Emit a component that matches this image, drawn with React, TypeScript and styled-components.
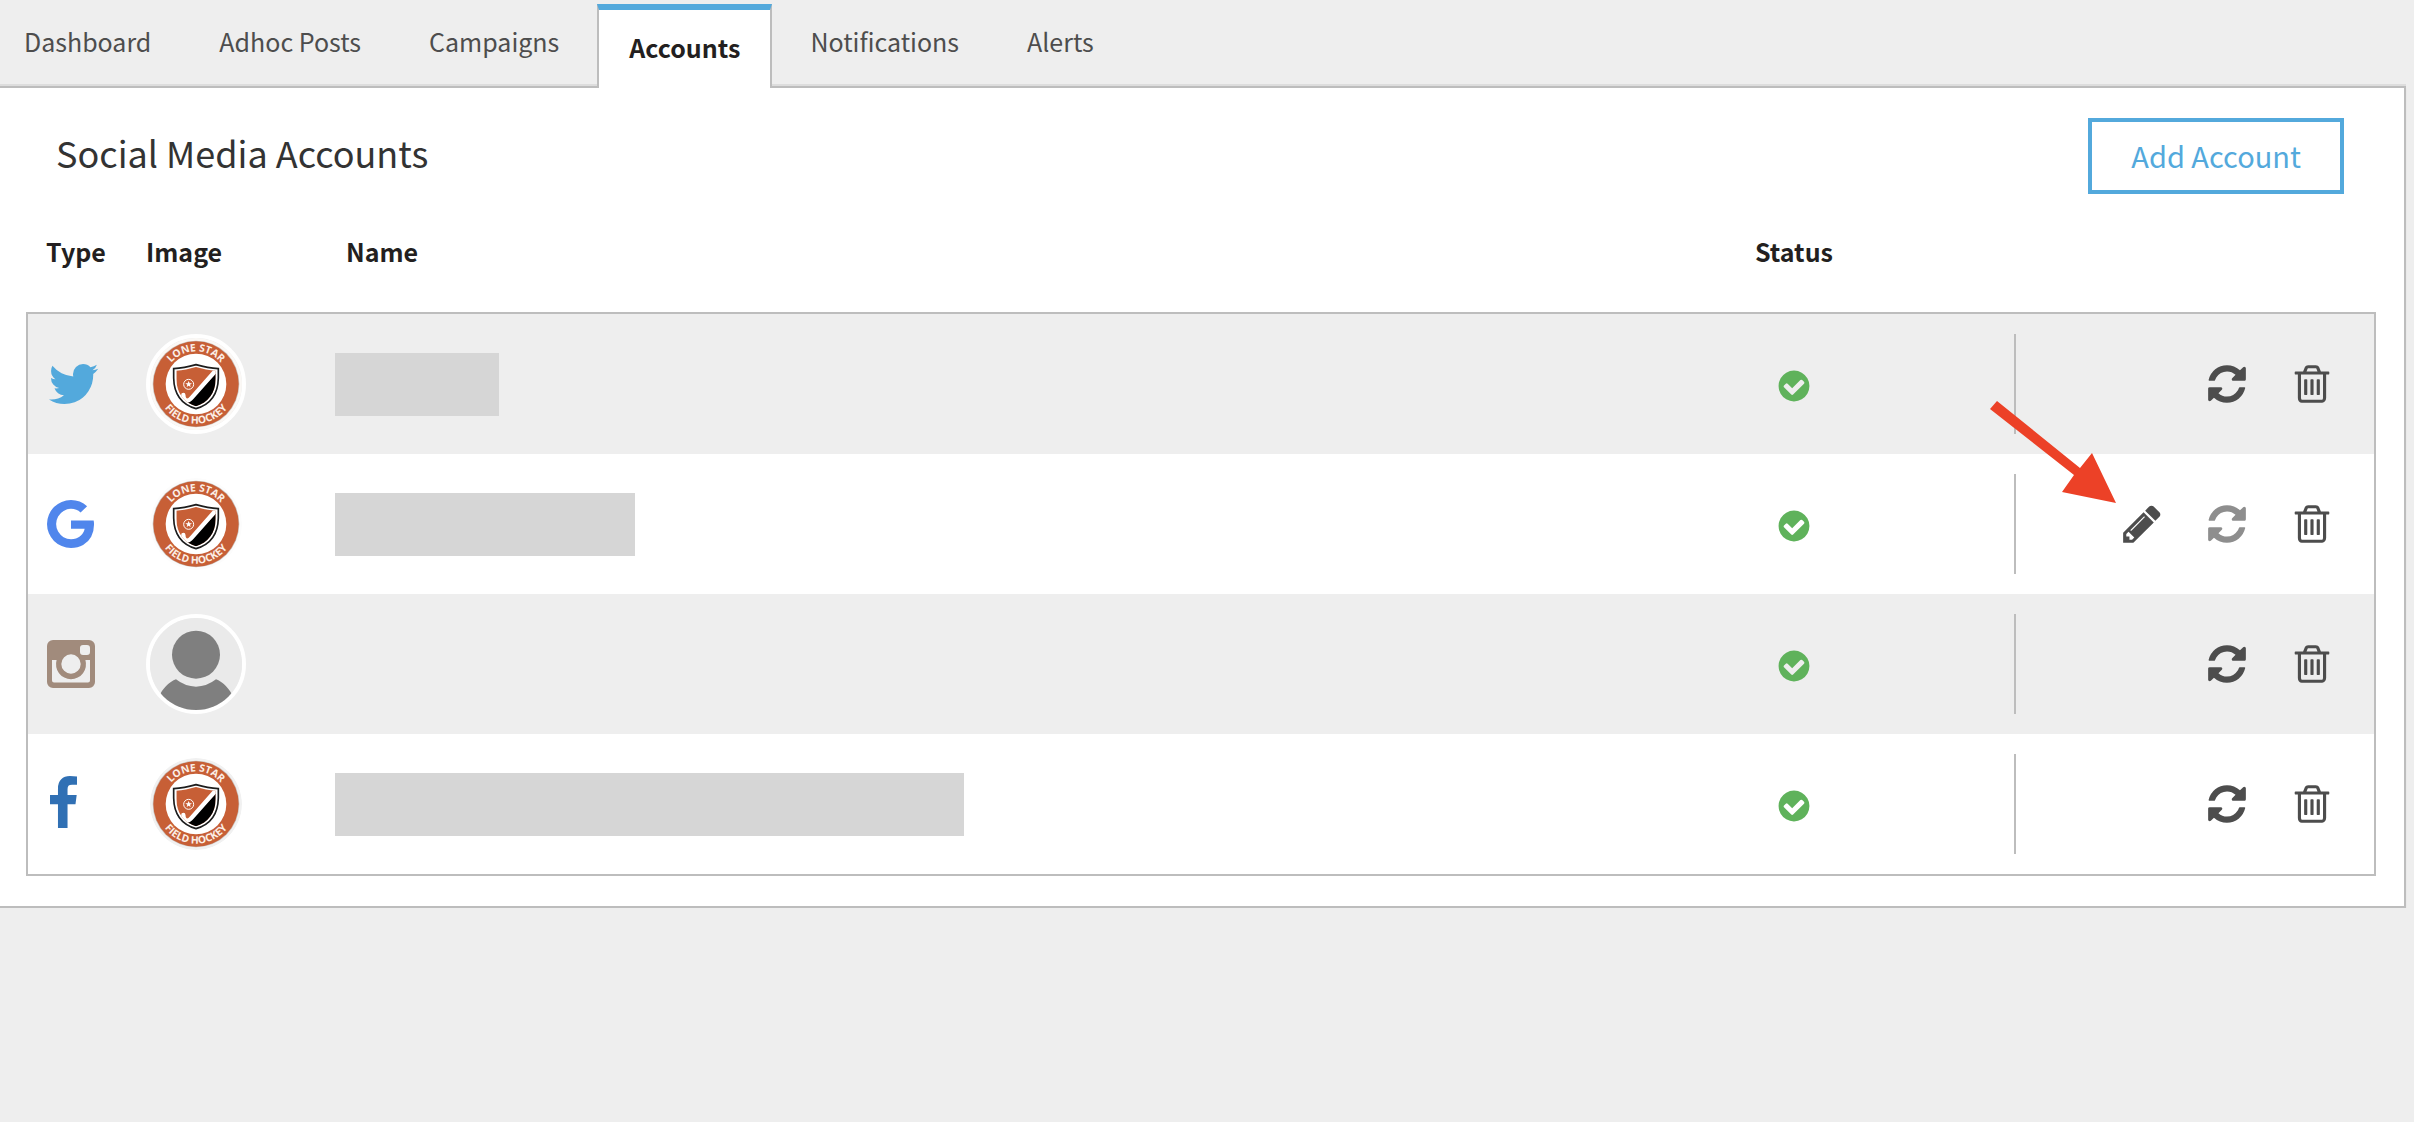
import React from "react";
import styled, { createGlobalStyle } from "styled-components";

const color = {
  page: "#eeeeee",
  panel: "#ffffff",
  line: "#bdbdbd",
  blue: "#53a9dc",
  text: "#4d4d4d",
  dark: "#231f20",
  title: "#333333",
  mask: "#d6d6d6",
  green: "#5fb25b",
};

const GlobalStyle = createGlobalStyle`
  *, *::before, *::after { box-sizing: border-box; }
  body {
    margin: 0;
    background: ${color.page};
    color: ${color.text};
    font-family: "Noto Sans CJK SC", "Noto Sans", sans-serif;
    font-size: 25px;
  }
`;

const Page = styled.div`
  padding-right: 8px;
`;

const TabBar = styled.nav`
  display: flex;
  align-items: flex-start;
  padding-top: 4px;
  margin-left: -10px;
  border-bottom: 2px solid #dddddd;
`;

const Tab = styled.a<{ $active?: boolean }>`
  position: relative;
  margin: 0 4px ${(p) => (p.$active ? "-4px" : "0")};
  padding: 21px 28px 27px;
  border: solid ${(p) => (p.$active ? color.line : "transparent")};
  border-width: 0 2px;
  line-height: 32px;
  color: ${color.text};
  text-decoration: none;
  ${(p) =>
    p.$active &&
    `
    padding: 21px 30px 25px;
    border-top: 6px solid ${color.blue};
    background: ${color.panel};
    color: ${color.dark};
    font-weight: 700;
  `}
`;

const Panel = styled.main`
  border: 2px solid ${color.line};
  border-left: 0;
  background: ${color.panel};
  box-shadow: 0 2px 2px rgba(0, 0, 0, 0.05);
`;

const PanelHeader = styled.header`
  display: flex;
  justify-content: space-between;
  align-items: baseline;
  padding: 30px 60px 0 56px;
`;

const Title = styled.h1`
  margin: 0;
  font-size: 36px;
  line-height: 48px;
  font-weight: 400;
  color: ${color.title};
`;

const AddButton = styled.button`
  padding: 15px 39px 17px;
  border: 4px solid ${color.blue};
  background: ${color.panel};
  color: ${color.blue};
  font-family: inherit;
  font-size: 29px;
  line-height: 36px;
  cursor: pointer;
`;

const TableArea = styled.div`
  padding: 0 28px 30px 26px;
`;

const Table = styled.table`
  width: 100%;
  table-layout: fixed;
  border-collapse: collapse;
`;

const Col = styled.col<{ $width?: number }>`
  width: ${(p) => (p.$width ? `${p.$width}px` : "auto")};
`;

const HeadCell = styled.th<{ $indent?: number; $center?: boolean }>`
  padding: 39px 0 43px ${(p) => p.$indent ?? 0}px;
  line-height: 36px;
  text-align: ${(p) => (p.$center ? "center" : "left")};
  color: ${color.dark};
`;

const Body = styled.tbody`
  border: 2px solid ${color.line};
`;

const Cell = styled.td<{ $indent?: number; $center?: boolean }>`
  height: 140px;
  padding: 0 0 0 ${(p) => p.$indent ?? 0}px;
  text-align: ${(p) => (p.$center ? "center" : "left")};
  vertical-align: middle;
  svg {
    display: inline-block;
    vertical-align: middle;
  }
`;

/* The outer rows share a pixel with the collapsed border of the table body. */
const Row = styled.tr`
  &:nth-child(odd) {
    background: ${color.page};
  }
  &:first-child ${Cell}, &:last-child ${Cell} {
    height: 141px;
  }
`;

const Avatar = styled.div`
  width: 100px;
  height: 100px;
  border: 4px solid #ffffff;
  border-radius: 50%;
  overflow: hidden;
  svg {
    display: block;
  }
`;

const Mask = styled.div<{ $width: number }>`
  width: ${(p) => p.$width}px;
  height: 63px;
  background: ${color.mask};
`;

const Actions = styled.div`
  position: relative;
  display: flex;
  justify-content: flex-end;
  align-items: center;
  gap: 41px;
  height: 100px;
  padding-right: 40px;
  border-left: 2px solid ${color.line};
`;

const IconButton = styled.button`
  width: 44px;
  height: 44px;
  padding: 0;
  border: 0;
  background: none;
  color: ${color.text};
  cursor: pointer;
  svg {
    display: block;
  }
  &:disabled {
    color: #8e8e8e;
    cursor: default;
  }
`;

const Pointer = styled.svg`
  position: absolute;
  left: -26px;
  top: -73px;
  pointer-events: none;
`;

const paths = {
  refresh:
    "M1639 1056q0 5-1 7-64 268-268 434.5t-478 166.5q-146 0-282.5-55t-243.5-157l-129 129q-19 19-45 19t-45-19-19-45v-448q0-26 19-45t45-19h448q26 0 45 19t19 45-19 45l-137 137q71 66 161 102t187 36q134 0 250-65t186-179q11-17 53-117 8-23 30-23h192q13 0 22.5 9.5t9.5 22.5zm25-800v448q0 26-19 45t-45 19h-448q-26 0-45-19t-19-45 19-45l138-138q-148-137-349-137-134 0-250 65t-186 179q-11 17-53 117-8 23-30 23h-199q-13 0-22.5-9.5t-9.5-22.5v-7q65-268 270-434.5t480-166.5q146 0 284 55.5t245 156.5l130-129q19-19 45-19t45 19 19 45z",
  trash:
    "M704 736v576q0 14-9 23t-23 9h-64q-14 0-23-9t-9-23v-576q0-14 9-23t23-9h64q14 0 23 9t9 23zm256 0v576q0 14-9 23t-23 9h-64q-14 0-23-9t-9-23v-576q0-14 9-23t23-9h64q14 0 23 9t9 23zm256 0v576q0 14-9 23t-23 9h-64q-14 0-23-9t-9-23v-576q0-14 9-23t23-9h64q14 0 23 9t9 23zm128 724v-948h-896v948q0 22 7 40.5t14.5 27 10.5 8.5h832q3 0 10.5-8.5t14.5-27 7-40.5zm-672-1076h448l-48-117q-7-9-17-11h-317q-10 2-17 11zm928 32v64q0 14-9 23t-23 9h-96v948q0 83-47 143.5t-113 60.5h-832q-66 0-113-58.5t-47-141.5v-952h-96q-14 0-23-9t-9-23v-64q0-14 9-23t23-9h309l70-167q15-37 54-63t79-26h320q40 0 79 26t54 63l70 167h309q14 0 23 9t9 23z",
  pencil:
    "M491 1536l91-91-235-235-91 91v107h128v128h107zm523-928q0-22-22-22-10 0-17 7l-542 542q-7 7-7 17 0 22 22 22 10 0 17-7l542-542q7-7 7-17zm-54-192l416 416-832 832h-416v-416zm683 96q0 53-37 90l-166 166-416-416 166-165q36-38 90-38 53 0 91 38l235 234q37 39 37 91z",
  check:
    "M1412 734q0-28-18-46l-91-90q-19-19-45-19t-45 19l-408 407-226-226q-19-19-45-19t-45 19l-91 90q-18 18-18 46 0 27 18 45l362 362q19 19 45 19 27 0 46-19l543-543q18-18 18-45zm252 162q0 209-103 385.5t-279.5 279.5-385.5 103-385.5-103-279.5-279.5-103-385.5 103-385.5 279.5-279.5 385.5-103 385.5 103 279.5 279.5 103 385.5z",
  twitter:
    "M1684 408q-67 98-162 167 1 14 1 42 0 130-38 259.5t-115.5 248.5-184.5 210.5-258 146-323 54.5q-271 0-496-145 35 4 78 4 225 0 401-138-105-2-188-64.5t-114-159.5q33 5 61 5 43 0 85-11-112-23-185.5-111.5t-73.5-205.5v-4q68 38 146 41-66-44-105-115t-39-154q0-88 44-163 121 149 294.5 238.5t371.5 99.5q-8-38-8-74 0-134 94.5-228.5t228.5-94.5q140 0 236 102 109-21 205-78-37 115-142 178 93-10 186-50z",
  google:
    "M896 786h725q12 67 12 128 0 217-91 387.5t-259.5 266.5-386.5 96q-157 0-299-60.5t-245-163.5-163.5-245-60.5-299 60.5-299 163.5-245 245-163.5 299-60.5q300 0 515 201l-209 201q-123-119-306-119-129 0-238.5 65t-173.5 176.5-64 243.5 64 243.5 173.5 176.5 238.5 65q87 0 160-24t120-60 82-82 51.5-87 22.5-78h-436v-264z",
  facebook:
    "M1343 12v264h-157q-86 0-116 36t-30 108v189h293l-39 296h-254v759h-306v-759h-255v-296h255v-218q0-186 104-288.5t277-102.5q147 0 228 12z",
};

const Glyph = ({ d, size }: { d: string; size: number }) => (
  <svg width={size} height={size} viewBox="0 0 1792 1792" fill="currentColor" aria-hidden="true">
    <path d={d} />
  </svg>
);

type Network = "twitter" | "google" | "instagram" | "facebook";

const networkGlyph = {
  twitter: { label: "Twitter", d: paths.twitter, x: 44, fill: "#53a9dc" },
  google: { label: "Google", d: paths.google, x: 128, fill: "#5086ec" },
  facebook: { label: "Facebook", d: paths.facebook, x: 383, fill: "#3070b4" },
};

const NetworkIcon = ({ network }: { network: Network }) => {
  if (network === "instagram") {
    return (
      <svg width="48" height="48" viewBox="0 0 48 48" role="img" aria-label="Instagram">
        <path
          fill="#a18b7c"
          fillRule="evenodd"
          d="M6 0H42a6 6 0 0 1 6 6V42a6 6 0 0 1-6 6H6a6 6 0 0 1-6-6V6a6 6 0 0 1 6-6Z
             M5 20V40.500a2 2 0 0 0 2 2H41a2 2 0 0 0 2-2V20H38.400a15 15 0 1 1-28.800 0Z
             M24 14.300a9.700 9.700 0 1 0 0 19.400a9.700 9.700 0 1 0 0-19.400Z
             M36 5H40a3 3 0 0 1 3 3V12a3 3 0 0 1-3 3H36a3 3 0 0 1-3-3V8a3 3 0 0 1 3-3Z"
        />
      </svg>
    );
  }
  const g = networkGlyph[network];
  return (
    <svg width="52" height="56" viewBox={`${g.x} 0 1664 1792`} role="img" aria-label={g.label}>
      <path d={g.d} fill={g.fill} />
    </svg>
  );
};

const ClubBadge = ({ id, halo }: { id: string; halo: string }) => (
  <svg width="92" height="92" viewBox="-138 -138 276 276" role="img" aria-label="Lone Star Field Hockey">
    <defs>
      <path id={`${id}-top`} d="M-98 0A98 98 0 0 1 98 0" />
      <path id={`${id}-bottom`} d="M-119 0A119 119 0 0 0 119 0" />
      <clipPath id={`${id}-shield`}>
        <path d="M0-51C-20-45-40-41-59-40V-15C-58 28-36 55 0 67C36 55 58 28 59-15V-40C40-41 20-45 0-51Z" />
      </clipPath>
    </defs>
    <circle r="138" fill={halo} />
    <circle r="130" fill="#c9c2be" />
    <circle r="128" fill="#c75f36" />
    <circle r="91" fill="#ffffff" />
    <g fill="#fbeee6" fontFamily='"Open Sans", sans-serif' fontSize="31" fontWeight="700" textAnchor="middle">
      <text>
        <textPath href={`#${id}-top`} startOffset="50%">LONE STAR</textPath>
      </text>
      <text>
        <textPath href={`#${id}-bottom`} startOffset="50%">FIELD HOCKEY</textPath>
      </text>
    </g>
    <path
      d="M0-58C-24-51-46-47-67-46V-18C-66 32-42 62 0 74C42 62 66 32 67-18V-46C46-47 24-51 0-58Z"
      fill="#ffffff"
      stroke="#1d1d1d"
      strokeWidth="5"
    />
    <g clipPath={`url(#${id}-shield)`}>
      <rect x="-70" y="-60" width="140" height="140" fill="#c75f36" />
      <path d="M70-42L-30 62L0 80H70Z" fill="#000000" />
      <path
        d="M64-46L-12 40Q-24 54-32 48Q-38 44-38 33"
        fill="none"
        stroke="#ffffff"
        strokeWidth="13"
        strokeLinecap="round"
      />
    </g>
    <circle cx="-22" cy="1" r="15" fill="none" stroke="#ffffff" strokeWidth="3" />
    <path d="M-22-9L-19-2H-12L-18 2L-16 9L-22 5L-28 9L-26 2L-32-2H-25Z" fill="#ffffff" />
  </svg>
);

const Silhouette = () => (
  <svg width="92" height="92" viewBox="-138 -138 276 276" role="img" aria-label="No picture">
    <rect x="-138" y="-138" width="276" height="276" fill="#eaeaea" />
    <circle cy="-28" r="72" fill="#7f7f7f" />
    <path d="M-60 46Q-32 68 0 68T60 46C80 54 96 70 106 88V140H-106V88C-96 70-80 54-60 46Z" fill="#7f7f7f" />
  </svg>
);

const Arrow = () => (
  <Pointer width="128" height="104" viewBox="0 0 128 104" aria-hidden="true">
    <path d="M7 0L90 67L102 52L126 102L72 91L84 74L0 8Z" fill="#ec4127" />
  </Pointer>
);

interface Account {
  network: Network;
  nameWidth?: number;
  halo?: string;
  editable?: boolean;
}

const accounts: Account[] = [
  { network: "twitter", nameWidth: 164, halo: "#fbf8f5" },
  { network: "google", nameWidth: 300, halo: "#fcfcfc", editable: true },
  { network: "instagram" },
  { network: "facebook", nameWidth: 629, halo: "#f1f1f1" },
];

const tabs = ["Dashboard", "Adhoc Posts", "Campaigns", "Accounts", "Notifications", "Alerts"];

const AccountRow = ({ account }: { account: Account }) => (
  <Row>
    <Cell $indent={19}>
      <NetworkIcon network={account.network} />
    </Cell>
    <Cell>
      <Avatar>
        {account.halo ? <ClubBadge id={account.network} halo={account.halo} /> : <Silhouette />}
      </Avatar>
    </Cell>
    <Cell>{account.nameWidth && <Mask $width={account.nameWidth} />}</Cell>
    <Cell $center>
      <svg width="36" height="36" viewBox="0 0 1792 1792" role="img" aria-label="Connected">
        <path d={paths.check} fill={color.green} />
      </svg>
    </Cell>
    <Cell>
      <Actions>
        {account.editable && (
          <IconButton type="button" aria-label="Edit">
            <Glyph d={paths.pencil} size={44} />
          </IconButton>
        )}
        <IconButton type="button" aria-label="Refresh" disabled={account.editable}>
          <Glyph d={paths.refresh} size={44} />
        </IconButton>
        <IconButton type="button" aria-label="Delete">
          <Glyph d={paths.trash} size={44} />
        </IconButton>
        {account.editable && <Arrow />}
      </Actions>
    </Cell>
  </Row>
);

export default function App() {
  return (
    <Page>
      <GlobalStyle />
      <TabBar>
        {tabs.map((name) => (
          <Tab key={name} href="#" $active={name === "Accounts"}>
            {name}
          </Tab>
        ))}
      </TabBar>
      <Panel>
        <PanelHeader>
          <Title>Social Media Accounts</Title>
          <AddButton type="button">Add Account</AddButton>
        </PanelHeader>
        <TableArea>
          <Table>
            <colgroup>
              <Col $width={119} />
              <Col $width={189} />
              <Col />
              <Col $width={440} />
              <Col $width={361} />
            </colgroup>
            <thead>
              <tr>
                <HeadCell $indent={19}>Type</HeadCell>
                <HeadCell>Image</HeadCell>
                <HeadCell $indent={11}>Name</HeadCell>
                <HeadCell $center>Status</HeadCell>
                <HeadCell aria-label="Actions" />
              </tr>
            </thead>
            <Body>
              {accounts.map((account) => (
                <AccountRow key={account.network} account={account} />
              ))}
            </Body>
          </Table>
        </TableArea>
      </Panel>
    </Page>
  );
}
